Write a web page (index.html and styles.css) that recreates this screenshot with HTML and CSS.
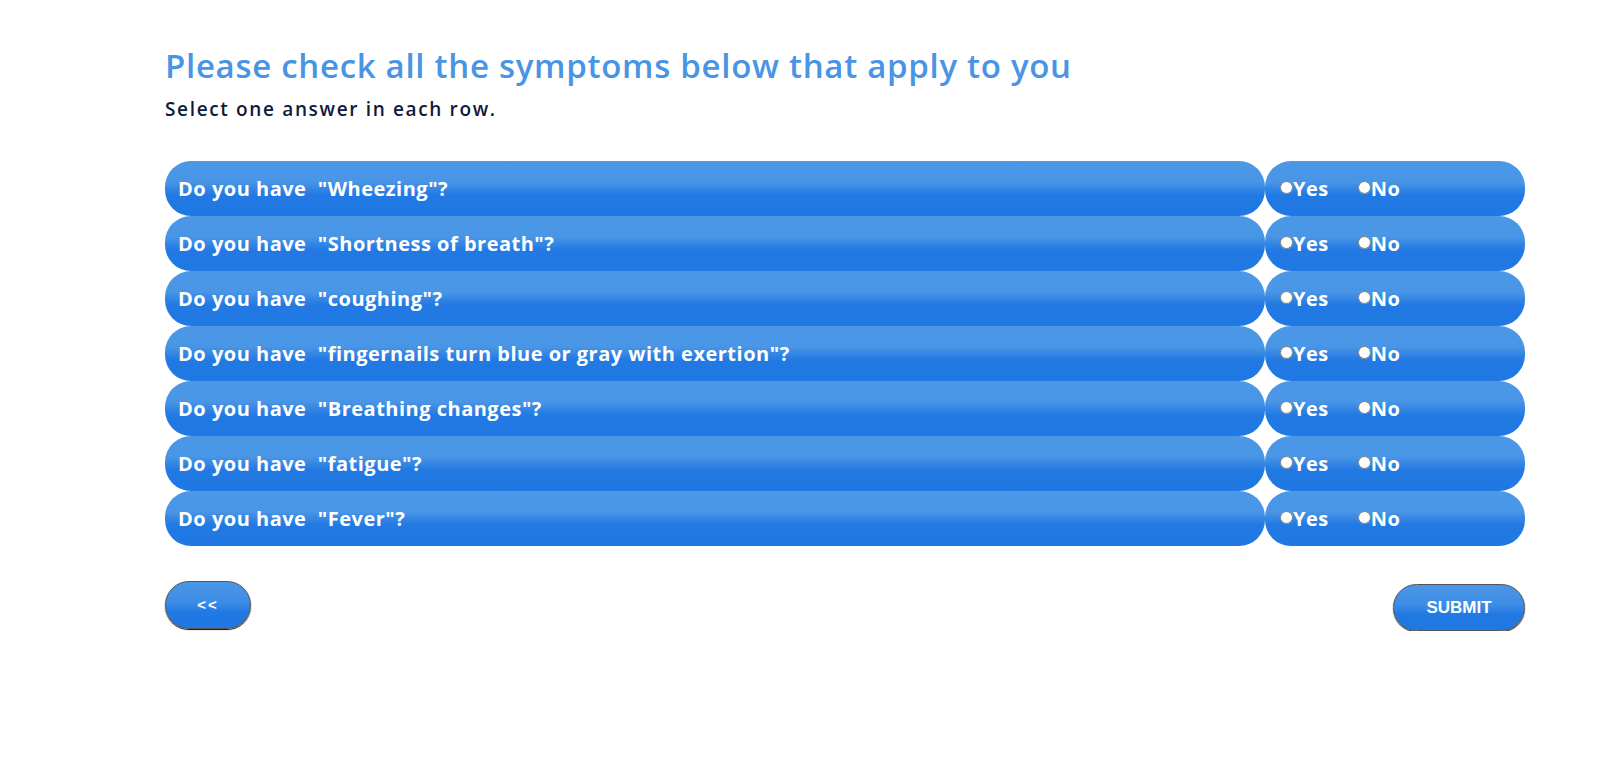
FILE: index.html
```html
<!DOCTYPE html>
<html lang="en">
<head>
<meta charset="utf-8">
<title>Symptoms</title>
<link rel="stylesheet" href="styles.css">
</head>
<body>
<main class="page">
  <h1 class="title">Please check all the symptoms below that apply to you</h1>
  <p class="subtitle">Select one answer in each row.</p>
  <div class="rows">
    <div class="row"><div class="q">Do you have&nbsp; "Wheezing"?</div><div class="opts"><label class="opt"><input type="radio" name="q1">Yes</label><label class="opt"><input type="radio" name="q1">No</label></div></div>
    <div class="row"><div class="q">Do you have&nbsp; "Shortness of breath"?</div><div class="opts"><label class="opt"><input type="radio" name="q2">Yes</label><label class="opt"><input type="radio" name="q2">No</label></div></div>
    <div class="row"><div class="q">Do you have&nbsp; "coughing"?</div><div class="opts"><label class="opt"><input type="radio" name="q3">Yes</label><label class="opt"><input type="radio" name="q3">No</label></div></div>
    <div class="row"><div class="q">Do you have&nbsp; "fingernails turn blue or gray with exertion"?</div><div class="opts"><label class="opt"><input type="radio" name="q4">Yes</label><label class="opt"><input type="radio" name="q4">No</label></div></div>
    <div class="row"><div class="q">Do you have&nbsp; "Breathing changes"?</div><div class="opts"><label class="opt"><input type="radio" name="q5">Yes</label><label class="opt"><input type="radio" name="q5">No</label></div></div>
    <div class="row"><div class="q">Do you have&nbsp; "fatigue"?</div><div class="opts"><label class="opt"><input type="radio" name="q6">Yes</label><label class="opt"><input type="radio" name="q6">No</label></div></div>
    <div class="row"><div class="q">Do you have&nbsp; "Fever"?</div><div class="opts"><label class="opt"><input type="radio" name="q7">Yes</label><label class="opt"><input type="radio" name="q7">No</label></div></div>
  </div>
  <div class="actions">
    <button class="btn btn-back" type="button">&lt;&lt;</button>
    <button class="btn btn-submit" type="button">SUBMIT</button>
  </div>
</main>
</body>
</html>
```
FILE: styles.css
```css
html, body {
  margin: 0;
  padding: 0;
  background: #ffffff;
}
body {
  font-family: "Open Sans", "DejaVu Sans", sans-serif;
}
.page {
  width: 1360px;
  margin-left: 165px;
  padding-top: 44px;
}
.title {
  margin: 0;
  font-size: 33px;
  line-height: 44px;
  font-weight: 600;
  color: #4a94e4;
  letter-spacing: 0.7px;
}
.subtitle {
  margin: 8px 0 0;
  font-size: 19px;
  line-height: 26px;
  font-weight: 600;
  color: #0f1a3a;
  letter-spacing: 1.65px;
}
.rows {
  margin-top: 39px;
  display: flex;
  flex-direction: column;
}
.row {
  display: flex;
  height: 55px;
}
.q, .opts {
  background: linear-gradient(to bottom, #4c98e7 0%, #4995e6 38%, #2279e3 62%, #1f78e3 100%);
  border-radius: 26px;
  color: #ffffff;
  font-weight: 700;
  font-size: 20px;
  letter-spacing: 0.5px;
  display: flex;
  align-items: center;
}
.q {
  width: 1100px;
  padding-left: 13px;
  box-sizing: border-box;
}
.opts {
  width: 260px;
  box-sizing: border-box;
  padding-left: 15px;
  gap: 29px;
}
.opt {
  display: flex;
  align-items: center;
}
.opt input {
  margin: -2px 0 0 0;
  width: 13px;
  height: 13px;
}
.actions {
  margin-top: 35px;
  display: flex;
  justify-content: space-between;
  align-items: flex-start;
}
.btn {
  font-family: "Liberation Sans", Arial, sans-serif;
  font-weight: 700;
  color: #ffffff;
  background: linear-gradient(to bottom, #4b97e7 0%, #3c8ce6 45%, #2179e3 65%, #1f78e3 100%);
  border: 1px solid #555555;
  box-shadow: 0 1px 1px #111;
  border-radius: 25px;
  cursor: pointer;
}
.btn-back {
  width: 86px;
  height: 48px;
  font-size: 15px;
  letter-spacing: 2px;
  padding-top: 0;
}
.btn-submit {
  margin-top: 3px;
  width: 132px;
  height: 47px;
  font-size: 17px;
}
```
